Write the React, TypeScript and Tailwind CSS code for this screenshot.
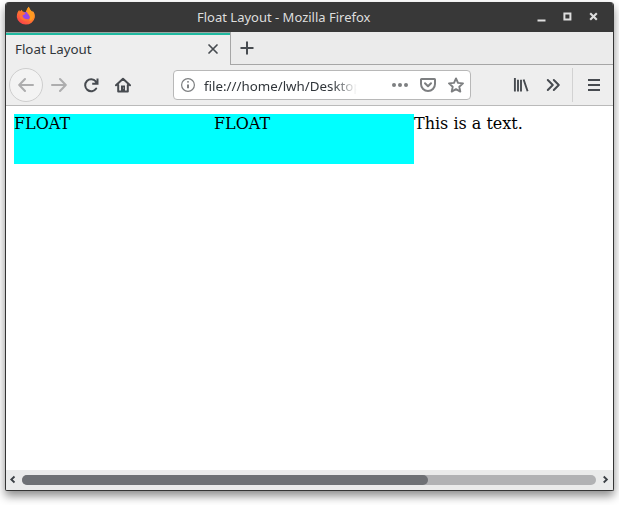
import type { ReactNode } from "react";

function Icon({ children, className = "text-[#474b50]", size = 16 }: { children: ReactNode; className?: string; size?: number }) {
  return (
    <svg
      width={size}
      height={size}
      viewBox={`0 0 ${size} ${size}`}
      fill="none"
      stroke="currentColor"
      strokeWidth="2"
      strokeLinecap="round"
      strokeLinejoin="round"
      className={`block shrink-0 ${className}`}
    >
      {children}
    </svg>
  );
}

function FirefoxLogo() {
  return (
    <svg width="20" height="20" viewBox="0 0 20 20" className="mb-[2px] ml-[10px] block shrink-0">
      <defs>
        <linearGradient id="flame" x1="16" y1="2" x2="5" y2="18" gradientUnits="userSpaceOnUse">
          <stop offset="0" stopColor="#ffa52c" />
          <stop offset=".5" stopColor="#ff7a2c" />
          <stop offset="1" stopColor="#f9404c" />
        </linearGradient>
      </defs>
      <path d="M.8 11C.8 7.4 1.8 5.4 3.2 4L3.9 5.4 5.6 3.8 6.7 5.4 9.6 6.2 11 3.2 12.8.8 14 4 16.3 6 16.5 4.7C18.6 6.8 19.2 9 18.8 11.5A9.1 8.6 0 0 1 .8 11Z" fill="url(#flame)" />
      <circle cx="10" cy="10" r="4" fill="#9547e8" />
      <path d="M12.8.8C13.6 3.8 17.8 6.2 17.6 10.4C17.2 13.4 15 14.9 13.2 14.5C15.2 11.5 13.2 9.2 11.5 7.3C10 5.6 10.6 2.8 12.8.8Z" fill="#ff9a1f" />
      <path d="M3.6 7.2C5 5.6 7.6 6 9.6 7.3L8.4 8.5 6.5 9.2C6.6 12 9 13.6 12.8 13C10.5 16 4.8 14.8 3.8 10.8Z" fill="#ff7135" />
    </svg>
  );
}

function TitleBar() {
  return (
    <header className="flex h-[30px] shrink-0 items-center bg-[#383838] text-[#dedede]">
      <FirefoxLogo />
      <h1 className="ml-[161px] w-[180px] whitespace-nowrap text-[13px] leading-[18px]">Float Layout - Mozilla Firefox</h1>
      <svg width="64" height="16" viewBox="0 0 64 16" className="ml-[158px] block" fill="none" stroke="#dedede">
        <path d="M2.5 11.5h8" strokeWidth="2" />
        <path d="M29.4 4.6h6v6h-6z" strokeWidth="2" />
        <path d="m55.2 4.2 6.6 6.6m0-6.6-6.6 6.6" strokeWidth="2.1" />
      </svg>
    </header>
  );
}

function TabStrip() {
  return (
    <div className="flex h-[33px] shrink-0">
      <div className="flex w-[225px] items-center border-t border-r border-t-[#9da7a4] border-r-[#a6a6a6] bg-[#eeeeee]">
        <div className="flex h-full w-full items-center border-t-2 border-[#20b9a0]">
          <span className="mb-[2px] ml-[9px] w-[190px] text-[13.33px] leading-[18px] text-[#31363b]">Float Layout</span>
          <Icon>
            <path d="m4 3 8 8m0-8-8 8" strokeWidth="1.7" />
          </Icon>
        </div>
      </div>
      <div className="flex flex-1 items-center border-b border-[#a6a6a6] pl-2">
        <Icon>
          <path d="M8 1.5v13M1.5 8h13" strokeLinecap="butt" />
        </Icon>
      </div>
    </div>
  );
}

function ToolButton({ children }: { children: ReactNode }) {
  return <button className="flex h-8 w-8 shrink-0 items-center justify-center">{children}</button>;
}

function AddressBar() {
  return (
    <div className="mx-[34px] flex h-[30px] w-[298px] shrink-0 items-center rounded-[4px] border border-[#b8b8b8] bg-white">
      <Icon className="ml-[6px] text-[#7d7f81]">
        <circle cx="8" cy="8" r="6.4" strokeWidth="1.2" />
        <path d="M8 7.4v3.8M8 4.2v1.3" strokeWidth="2" strokeLinecap="butt" />
      </Icon>
      <div className="mt-[2px] ml-[8px] w-[154px] whitespace-nowrap text-[13.33px] leading-[18px] text-[#31363b] [mask-image:linear-gradient(to_right,black_129px,transparent_153px)]">
        file:///home/lwh/Desktop
      </div>
      <Icon className="ml-[34px] text-[#7d7f81]">
        <g fill="currentColor" stroke="none">
          <circle cx="2" cy="8" r="2" />
          <circle cx="8" cy="8" r="2" />
          <circle cx="14" cy="8" r="2" />
        </g>
      </Icon>
      <Icon className="ml-3 text-[#7d7f81]">
        <path d="M1.5 2h13a.5.5 0 0 1 .5.5V7a7 7 0 0 1-14 0V2.5a.5.5 0 0 1 .5-.5ZM5 6.2l3 3 3-3" />
      </Icon>
      <Icon className="ml-3 text-[#7d7f81]">
        <path d="m8 1.4 2 4.5 5 .5-3.7 3.3 1 4.9L8 12.1l-4.3 2.5 1-4.9L1 6.4l5-.5Z" strokeWidth="1.9" />
      </Icon>
    </div>
  );
}

function Toolbar() {
  return (
    <div className="flex h-[41px] shrink-0 items-center border-b border-[#bababa] bg-[#eeeeee]">
      <button className="ml-[3px] flex h-[34px] w-[34px] shrink-0 items-center justify-center rounded-full border border-[#cecece] bg-[#f3f3f3]">
        <Icon className="text-[#adadae]"><path d="M15 8H1.5M7 2 1.2 8 7 14" /></Icon>
      </button>
      <ToolButton>
        <Icon className="text-[#adadae]"><path d="M1 8h13.5M9 2l5.8 6L9 14" /></Icon>
      </ToolButton>
      <ToolButton>
        <Icon>
          <path d="M13.2 11.5A6 6 0 1 1 12.8 4.4" />
          <path d="M14.5 1.5v5.3H9.2" strokeLinecap="butt" strokeLinejoin="miter" />
          <path d="M14.5 3v3.5H11Z" fill="currentColor" stroke="none" />
        </Icon>
      </ToolButton>
      <ToolButton>
        <Icon>
          <path d="M1 8.3 8 1.7 15 8.3M3.2 8v6.4h9.6V8" />
          <path d="M6 14V8.5h4V14Z" fill="currentColor" stroke="none" />
          <path d="M8.5 10.5v1.2" stroke="#a6a7a9" strokeWidth="1" strokeLinecap="butt" />
        </Icon>
      </ToolButton>
      <AddressBar />
      <ToolButton>
        <Icon>
          <path d="M1.9 1v13.5M5 2.7v11.8M8 2.7v11.8M10.6 2.5 14.6 14.3" strokeWidth="1.9" strokeLinecap="butt" />
        </Icon>
      </ToolButton>
      <ToolButton>
        <Icon><path d="m2.8 3 5 5-5 5M8.8 3l5 5-5 5" /></Icon>
      </ToolButton>
      <div className="ml-[3px] h-[34px] w-px bg-[#d2d2d2]" />
      <button className="ml-[5px] flex h-8 w-8 items-center justify-center">
        <Icon><path d="M2 3h12M2 8h12M2 13h12" strokeLinecap="butt" /></Icon>
      </button>
    </div>
  );
}

function PageContent() {
  return (
    <main className="flex flex-1 items-start bg-white p-2 font-['DejaVu_Serif',serif] text-base leading-[19px] text-black">
      <div className="h-[50px] w-[200px] bg-[#00ffff]">FLOAT</div>
      <div className="h-[50px] w-[200px] bg-[#00ffff]">FLOAT</div>
      <p>This is a text.</p>
    </main>
  );
}

function ScrollBar() {
  return (
    <div className="flex h-5 shrink-0 items-center bg-[#eaebeb]">
      <svg width="16" height="20" viewBox="0 0 16 20" fill="none" stroke="#3b4045" strokeWidth="1.8">
        <path d="M8.5 6.5 5.3 9.5l3.2 3" />
      </svg>
      <div className="h-[10px] w-[574px] shrink-0 rounded-full bg-[#b1b2b4]">
        <div className="h-full w-[406px] rounded-full bg-[#6e7175]" />
      </div>
      <svg width="17" height="20" viewBox="0 0 17 20" fill="none" stroke="#3b4045" strokeWidth="1.8">
        <path d="m7.7 6.5 3.2 3-3.2 3" />
      </svg>
    </div>
  );
}

export default function App() {
  return (
    <div className="h-[505px] w-[619px] overflow-hidden bg-white pt-[2px] pl-[5px] font-['Noto_Sans',sans-serif]">
      <div className="flex h-[489px] w-[609px] flex-col overflow-hidden rounded-t-[4px] rounded-b-[2px] border-x border-b border-[#353535] bg-[#ebebeb] shadow-[0_5px_10px_rgba(0,0,0,0.45)]">
        <TitleBar />
        <TabStrip />
        <Toolbar />
        <PageContent />
        <ScrollBar />
      </div>
    </div>
  );
}
